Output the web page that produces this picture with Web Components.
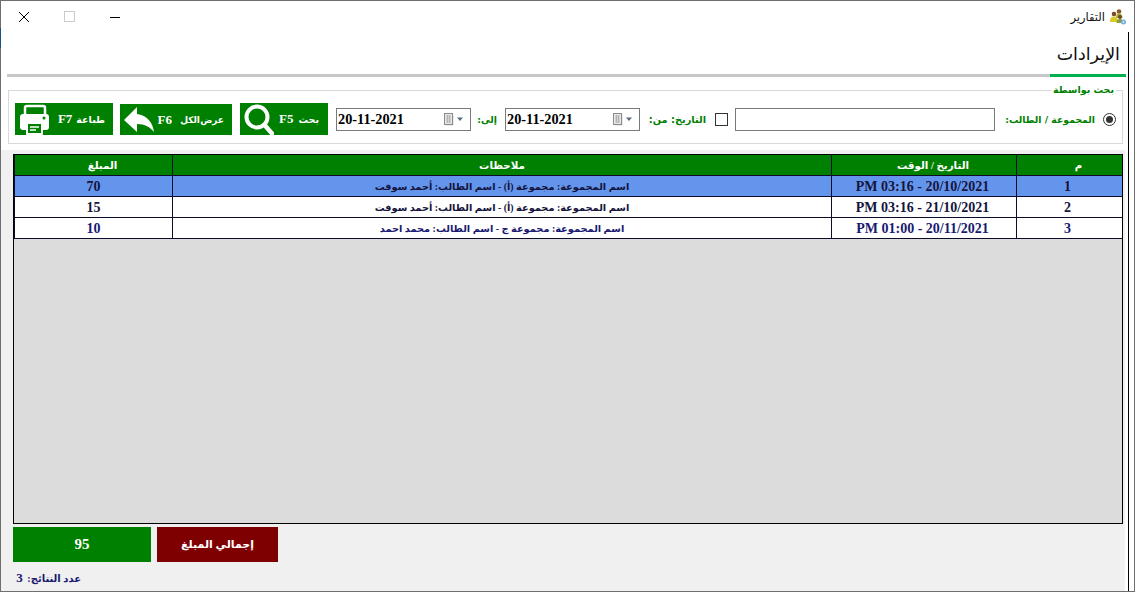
<!DOCTYPE html>
<html lang="ar">
<head>
<meta charset="utf-8">
<title>التقارير</title>
<style>
html, body { margin: 0; padding: 0; background: #fff; }
</style>
</head>
<body>
<report-window></report-window>
<script>
const FONT = '"Liberation Serif", "DejaVu Sans", serif'

class TitleBar extends HTMLElement {
  constructor () {
    super()
    this.attachShadow({ mode: 'open' }).innerHTML = `
<style>
:host { display: flex; height: 31px; background: #fff; justify-content: space-between; align-items: center; }
.controls { display: flex; }
.controls span { width: 45.5px; height: 30px; display: flex; align-items: center; justify-content: center; }
.title { display: flex; align-items: center; gap: 5px; padding-right: 8px; direction: rtl; font: 11.5px "DejaVu Sans", sans-serif; color: #111; }
svg { display: block; }
</style>
<div class="controls">
  <span><svg width="12" height="12" viewBox="0 0 12 12"><path d="M1 1L11 11M11 1L1 11" stroke="#000" stroke-width="1" fill="none"/></svg></span>
  <span><svg width="11" height="11" viewBox="0 0 11 11"><rect x=".5" y=".5" width="10" height="10" fill="none" stroke="#ccc"/></svg></span>
  <span><svg width="10" height="10" viewBox="0 0 10 10"><path d="M0 5.5H10" stroke="#000" fill="none"/></svg></span>
</div>
<div class="title">
  <svg width="16" height="16" viewBox="0 0 16 16">
    <circle cx="9" cy="2.500" r="2.300" fill="#8a5a2c"/><path d="M6 9c0-3 1-4.500 3-4.500s3.500 1.500 3.500 4.500z" fill="#a8a62e"/>
    <circle cx="4" cy="5" r="2.300" fill="#7a4c22"/><path d="M0 13c0-4 1.500-5.500 4-5.500S8 9 8 13z" fill="#d9c92c"/>
    <circle cx="10" cy="8" r="2" fill="#6b4a28"/><path d="M6.500 14c0-3 1-4 3.500-4s3 1 3 4z" fill="#8d9c3a"/>
    <circle cx="13.500" cy="13" r="2.500" fill="#6fb0e0"/><circle cx="13.500" cy="13" r="1" fill="#d8ecfa"/>
  </svg>
  <slot></slot>
</div>`
  }
}
customElements.define('title-bar', TitleBar)

class TabHeader extends HTMLElement {
  constructor () {
    super()
    this.attachShadow({ mode: 'open' }).innerHTML = `
<style>
:host { display: block; direction: rtl; border-bottom: 3px solid #c8c8c8; height: 42px; }
.tab { display: block; width: 76px; height: 42px; border-bottom: 3px solid #00b050; font: 17.5px "DejaVu Sans", sans-serif; color: #111; white-space: nowrap; }
.tab span { display: block; line-height: 44px; padding-right: 6px; }
</style>
<div class="tab"><span><slot></slot></span></div>`
  }
}
customElements.define('tab-header', TabHeader)

class ActionButton extends HTMLElement {
  constructor () {
    super()
    this.attachShadow({ mode: 'open' }).innerHTML = `
<style>
:host { display: flex; flex: none; box-sizing: border-box; height: 32px; background: #008000; color: #fff; align-items: center; justify-content: space-between; direction: rtl; font: bold 9.5px ${FONT}; white-space: nowrap; }
.label { display: flex; gap: var(--label-gap, 4px); align-items: center; }
::slotted(b) { font: bold 13px "Liberation Serif", serif; }
::slotted(svg) { display: block; flex: none; }
</style>
<div class="label"><slot></slot></div>
<slot name="icon"></slot>`
  }
}
customElements.define('action-button', ActionButton)

class DatePicker extends HTMLElement {
  constructor () {
    super()
    this.attachShadow({ mode: 'open' }).innerHTML = `
<style>
:host { display: flex; flex: none; box-sizing: border-box; width: 135px; height: 23px; margin-top: 1px; border: 1px solid #7a7a7a; background: #fff; align-items: center; justify-content: space-between; padding: 0 6px 0 1px; direction: ltr; }
.value { font: bold 14.3px "Liberation Serif", serif; color: #000; }
svg { display: block; }
</style>
<span class="value"><slot></slot></span>
<svg width="20" height="13" viewBox="0 0 20 13">
  <rect x="1.500" y="1.500" width="8" height="11" fill="#d8d8d8"/>
  <rect x=".5" y=".5" width="8" height="11" fill="#e8e8e8" stroke="#8a8a8a"/>
  <path d="M2 3H7M2 5H7M2 7H7M2 9H7M3.500 2V10M5.500 2V10" stroke="#a0a0a0" stroke-width=".6"/>
  <path d="M13 4.500H19L16 8z" fill="#5a6a80"/>
</svg>`
  }
}
customElements.define('date-picker', DatePicker)

class SearchPanel extends HTMLElement {
  constructor () {
    super()
    this.attachShadow({ mode: 'open' }).innerHTML = `
<style>
:host { display: block; margin: 6px 3px 0 1px; direction: rtl; }
fieldset { margin: 0; padding: 6px 6px 8px 6px; border: 1px solid #d9d9d9; min-width: 0; }
legend { font: bold 9.5px "DejaVu Sans", sans-serif; color: #008000; padding: 0 2px; margin-right: 0; height: 14px; line-height: 14px; }
.row { display: flex; align-items: center; height: 32px; }
.label { flex: none; color: #008000; font: bold 9.3px "DejaVu Sans", sans-serif; white-space: nowrap; }
.radio { flex: none; width: 13px; height: 13px; border: 1px solid #333; border-radius: 50%; box-sizing: border-box; display: flex; align-items: center; justify-content: center; }
.radio i { width: 7px; height: 7px; border-radius: 50%; background: #333; }
.check { flex: none; width: 13px; height: 13px; border: 1px solid #333; box-sizing: border-box; background: #fff; margin: 1px 7px 0 9px; }
.text { flex: none; width: 260px; height: 23px; margin-top: 1px; box-sizing: border-box; border: 1px solid #7a7a7a; background: #fff; margin-right: 8px; }
.group { width: 92px; margin-right: 8px; }
.from { width: 59px; margin-left: 7px; font-size: 9.8px; }
.to { width: 19px; margin: 0 8px 0 7px; }
action-button { margin-right: 8px; }
</style>
<fieldset>
  <legend>بحث بواسطة</legend>
  <div class="row">
    <span class="radio"><i></i></span>
    <span class="label group">المجموعة / الطالب:</span>
    <span class="text"></span>
    <span class="check"></span>
    <span class="label from">التاريخ: من:</span>
    <date-picker>20-11-2021</date-picker>
    <span class="label to">إلى:</span>
    <date-picker>20-11-2021</date-picker>
    <action-button style="width:88px;padding-right:9px;--label-gap:5px">
      <span>بحث</span><b>F5</b>
      <svg slot="icon" width="34" height="32" viewBox="0 0 34 32"><circle cx="17" cy="14" r="10.500" fill="none" stroke="#fff" stroke-width="4"/><path d="M24.500 22L32 30.500" stroke="#fff" stroke-width="4.500" stroke-linecap="round"/></svg>
    </action-button>
    <action-button style="width:112px;padding-right:8px;--label-gap:6px;height:31px;margin-top:1px">
      <span style="width:46px;font-size:9px;word-spacing:-2px">عرض الكل</span><b>F6</b>
      <svg slot="icon" width="36" height="28" viewBox="0 0 36 28"><path d="M4 14L17 1V8C27 9 33 17 34 26C30 21 25 18 17 18V26Z" fill="#fff"/></svg>
    </action-button>
    <action-button style="width:98px;margin-right:7px;padding-right:8px">
      <span>طباعة</span><b>F7</b>
      <svg slot="icon" width="39" height="32" viewBox="0 0 39 32">
        <rect x="10" y="3" width="20" height="12" rx="2" fill="none" stroke="#fff" stroke-width="2.500"/>
        <path d="M8 11H31A3 3 0 0 1 34 14V24A3 3 0 0 1 31 27H8A3 3 0 0 1 5 24V14A3 3 0 0 1 8 11Z" fill="#fff"/>
        <circle cx="29" cy="15" r="1.500" fill="#008000"/>
        <rect x="11" y="19" width="17" height="13" rx="1" fill="#fff"/>
        <rect x="13" y="21" width="13" height="9" fill="#008000"/>
        <path d="M15 24H24M15 27H21" stroke="#fff" stroke-width="1.500"/>
      </svg>
    </action-button>
  </div>
</fieldset>`
  }
}
customElements.define('search-panel', SearchPanel)

class GridCell extends HTMLElement {
  constructor () {
    super()
    this.attachShadow({ mode: 'open' }).innerHTML = `
<style>
:host { display: flex; align-items: center; justify-content: center; box-sizing: border-box; border-left: 1px solid #0d0d2b; white-space: nowrap; min-width: 0; }
:host([num]) { font-size: 14px; padding-top: 2px; }
:host([shift]) { padding-left: 18px; }
</style>
<slot></slot>`
  }
}
customElements.define('grid-cell', GridCell)

class GridRow extends HTMLElement {
  constructor () {
    super()
    this.attachShadow({ mode: 'open' }).innerHTML = `
<style>
:host { display: grid; grid-template-columns: 106px 185px 659px 158px; height: 21px; box-sizing: border-box; border-bottom: 1px solid #0d0d2b; background: #fff; color: #14143c; direction: rtl; font: bold 9.8px ${FONT}; }
:host([header]) { background: #008000; color: #fff; font-size: 10.3px; }
:host([selected]) { background: #6495ed; }
:host([navy]) { color: #191970; }
</style>
<slot></slot>`
  }
}
customElements.define('grid-row', GridRow)

class DataGrid extends HTMLElement {
  constructor () {
    super()
    this.attachShadow({ mode: 'open' }).innerHTML = `
<style>
:host { display: block; box-sizing: border-box; width: 1110px; height: 370px; border: 1px solid #000; background: #dcdcdc; }
</style>
<slot></slot>`
  }
}
customElements.define('data-grid', DataGrid)

class TotalsBar extends HTMLElement {
  constructor () {
    super()
    this.attachShadow({ mode: 'open' }).innerHTML = `
<style>
:host { display: flex; gap: 6px; margin-top: 3px; height: 35px; color: #fff; font: bold 15px ${FONT}; }
div { display: flex; align-items: center; justify-content: center; }
.sum { width: 138px; background: #008000; }
.caption { width: 121px; background: #7f0000; direction: rtl; font-size: 11px; }
</style>
<div class="sum"><slot name="sum"></slot></div>
<div class="caption"><slot name="caption"></slot></div>`
  }
}
customElements.define('totals-bar', TotalsBar)

class ReportWindow extends HTMLElement {
  constructor () {
    super()
    this.attachShadow({ mode: 'open' }).innerHTML = `
<style>
:host { display: flex; flex-direction: column; position: relative; box-sizing: border-box; width: 1135px; height: 592px; border: 1px solid #6e6e6e; background: #fff; }
.sliver { position: absolute; left: -1px; top: 27px; width: 1px; height: 20px; background: #1f4e79; }
.body { flex: 1; display: flex; min-height: 0; }
.main { width: 1125px; display: flex; flex-direction: column; }
.top { height: 118px; padding-left: 6px; box-sizing: border-box; }
.bottom { flex: 1; background: #f0f0f0; margin-right: 1px; padding: 4px 0 0 12px; }
.rail { width: 2px; }
.line { width: 1px; background: #000; }
.count { margin: 8px 0 0 2px; direction: rtl; width: 66px; font: bold 10px ${FONT}; color: #191970; white-space: nowrap; }
.count b { font-size: 13px; margin-right: 2px; }
</style>
<div class="sliver"></div>
<title-bar>التقارير</title-bar>
<div class="body">
  <div class="main">
    <div class="top">
      <tab-header>الإيرادات</tab-header>
      <search-panel></search-panel>
    </div>
    <div class="bottom">
      <data-grid>
        <grid-row header><grid-cell shift>م</grid-cell><grid-cell shift>التاريخ / الوقت</grid-cell><grid-cell>ملاحظات</grid-cell><grid-cell shift>المبلغ</grid-cell></grid-row>
        <grid-row selected><grid-cell num style="padding-right:4px">1</grid-cell><grid-cell num style="padding-right:3px"><span dir="ltr">PM 03:16 - 20/10/2021</span></grid-cell><grid-cell>اسم المجموعة: مجموعة (أ) - اسم الطالب: أحمد سوفت</grid-cell><grid-cell num>70</grid-cell></grid-row>
        <grid-row><grid-cell num style="padding-right:4px">2</grid-cell><grid-cell num style="padding-right:3px"><span dir="ltr">PM 03:16 - 21/10/2021</span></grid-cell><grid-cell>اسم المجموعة: مجموعة (أ) - اسم الطالب: أحمد سوفت</grid-cell><grid-cell num>15</grid-cell></grid-row>
        <grid-row navy><grid-cell num style="padding-right:4px">3</grid-cell><grid-cell num style="padding-right:3px"><span dir="ltr">PM 01:00 - 20/11/2021</span></grid-cell><grid-cell>اسم المجموعة: مجموعة ج - اسم الطالب: محمد احمد</grid-cell><grid-cell num>10</grid-cell></grid-row>
      </data-grid>
      <totals-bar><span slot="sum">95</span><span slot="caption">إجمالي المبلغ</span></totals-bar>
      <div class="count">عدد النتائج: <b>3</b></div>
    </div>
  </div>
  <div class="rail"></div>
  <div class="line"></div>
</div>`
  }
}
customElements.define('report-window', ReportWindow)
</script>
</body>
</html>
